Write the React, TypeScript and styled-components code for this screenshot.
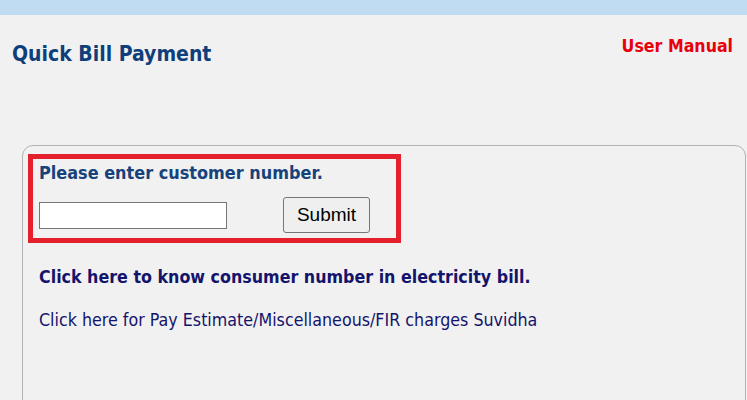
import styled, { createGlobalStyle } from "styled-components"

const Global = createGlobalStyle`
    html, body {
        margin: 0;
        padding: 0;
        background: #f1f1f1;
    }
`

const Page = styled.div`
    width: 747px;
    height: 400px;
    overflow: hidden;
    background: #f1f1f1;
    font-family: "DejaVu Sans Condensed", "DejaVu Sans", sans-serif;
`
const TopBar = styled.div`
    height: 15px;
    background-color: #bfdcf2;
`
const Header = styled.div`
    display: flex;
    justify-content: space-between;
    align-items: flex-start;
    padding: 0 14px 0 12px;
    height: 130px;
`
const Title = styled.h1`
    margin: 26px 0 0;
    font-size: 21px;
    font-weight: bold;
    line-height: 26px;
    color: #0f3f7a;
`
const ManualLink = styled.a`
    margin-top: 20px;
    font-size: 17.6px;
    font-weight: bold;
    line-height: 22px;
    color: #e8000b;
    text-decoration: none;
    cursor: pointer;
`
const Card = styled.div`
    margin: 0 1px 0 22px;
    height: 280px;
    border: 1px solid #b3b3b3;
    border-radius: 11px;
    padding: 8px 5px 0;
`
const Highlight = styled.div`
    width: 357px;
    border: 5px solid #e3202b;
    padding: 3px 0 5px 6px;
`
const Prompt = styled.p`
    margin: 0;
    font-size: 17.9px;
    font-weight: bold;
    line-height: 22px;
    color: #17427a;
`
const FormRow = styled.div`
    display: flex;
    align-items: center;
    gap: 56px;
    margin-top: 13px;
`
const Input = styled.input`
    box-sizing: border-box;
    width: 188px;
    height: 27px;
    border: 1px solid #767676;
    background: #fff;
    padding: 2px 4px;
    font-family: "Liberation Sans", Arial, sans-serif;
    font-size: 16px;
`
const SubmitButton = styled.button`
    box-sizing: border-box;
    width: 87px;
    height: 36px;
    border: 1px solid #767676;
    border-radius: 3px;
    background: #efefef;
    color: #000;
    font-family: "Liberation Sans", Arial, sans-serif;
    font-size: 19px;
`
const Links = styled.div`
    padding-left: 11px;
`
const InfoLink = styled.a<{ bold?: boolean }>`
    display: block;
    margin-top: ${({ bold }) => bold ? '23px' : '21px'};
    font-size: 17.7px;
    font-weight: ${({ bold }) => bold ? 'bold' : 'normal'};
    line-height: 22px;
    color: #14146b;
    text-decoration: none;
    cursor: pointer;
`

export default function App() {
    return (
        <Page>
            <Global />
            <TopBar />
            <Header>
                <Title>Quick Bill Payment</Title>
                <ManualLink>User Manual</ManualLink>
            </Header>
            <Card>
                <Highlight>
                    <Prompt>Please enter customer number.</Prompt>
                    <FormRow>
                        <Input type="text" />
                        <SubmitButton>Submit</SubmitButton>
                    </FormRow>
                </Highlight>
                <Links>
                    <InfoLink bold>Click here to know consumer number in electricity bill.</InfoLink>
                    <InfoLink>Click here for Pay Estimate/Miscellaneous/FIR charges Suvidha</InfoLink>
                </Links>
            </Card>
        </Page>
    )
}
